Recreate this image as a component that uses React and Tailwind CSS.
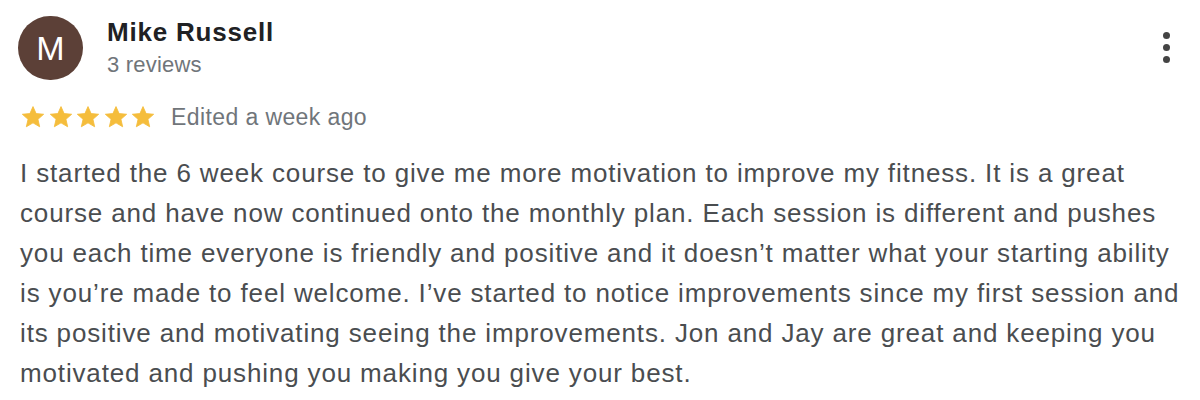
import { useState } from "react";

function Star() {
  return (
    <svg viewBox="0 0 24 24" className="w-[26px] h-[26px]" fill="#f5bd3c">
      <path
        d="M12 2.4l2.85 6.45 7 .62-5.3 4.65 1.58 6.88L12 17.4l-6.13 3.6 1.58-6.88-5.3-4.65 7-.62z"
        stroke="#f5bd3c"
        strokeWidth="0.8"
        strokeLinejoin="round"
      />
    </svg>
  );
}

export default function App() {
  const [rating] = useState(5);

  return (
    <div className="w-[1200px] h-[400px] bg-white font-['Liberation_Sans',Arial,sans-serif] px-5 relative">
      {/* HEADER */}
      <div className="flex items-start pt-[16px]">
        <div className="w-[65px] h-[64px] -ml-[2px] rounded-full bg-[#5c4037] flex items-center justify-center text-white text-[34px] shrink-0">
          M
        </div>
        <div className="ml-[24px] flex flex-col">
          <span className="text-[#202124] text-[26px] tracking-[0.8px] font-bold leading-[32px]">
            Mike Russell
          </span>
          <span className="text-[#70757a] text-[22px] tracking-[0.2px] leading-[28px] mt-[3px]">
            3 reviews
          </span>
        </div>
      </div>

      {/* MENU */}
      <div className="absolute right-[30px] top-[32px] flex flex-col gap-[5px]">
        <span className="w-[7px] h-[7px] rounded-full bg-[#444]" />
        <span className="w-[7px] h-[7px] rounded-full bg-[#444]" />
        <span className="w-[7px] h-[7px] rounded-full bg-[#444]" />
      </div>

      {/* RATING */}
      <div className="flex items-center mt-[23px]">
        <div className="flex gap-[1.5px]">
          {Array.from({ length: rating }).map((_, i) => (
            <Star key={i} />
          ))}
        </div>
        <span className="ml-[15px] text-[#70757a] text-[23px] tracking-[0.4px] leading-[28px]">
          Edited a week ago
        </span>
      </div>

      {/* BODY */}
      <p className="mt-[22px] text-[#4a4d50] text-[26px] tracking-[0.85px] leading-[40px] w-[1170px]">
        I started the 6 week course to give me more motivation to improve my fitness. It is a great<br />
        course and have now continued onto the monthly plan. Each session is different and pushes<br />
        you each time everyone is friendly and positive and it doesn’t matter what your starting ability<br />
        is you’re made to feel welcome. I’ve started to notice improvements since my first session and<br />
        its positive and motivating seeing the improvements. Jon and Jay are great and keeping you<br />
        motivated and pushing you making you give your best.
      </p>
    </div>
  );
}
